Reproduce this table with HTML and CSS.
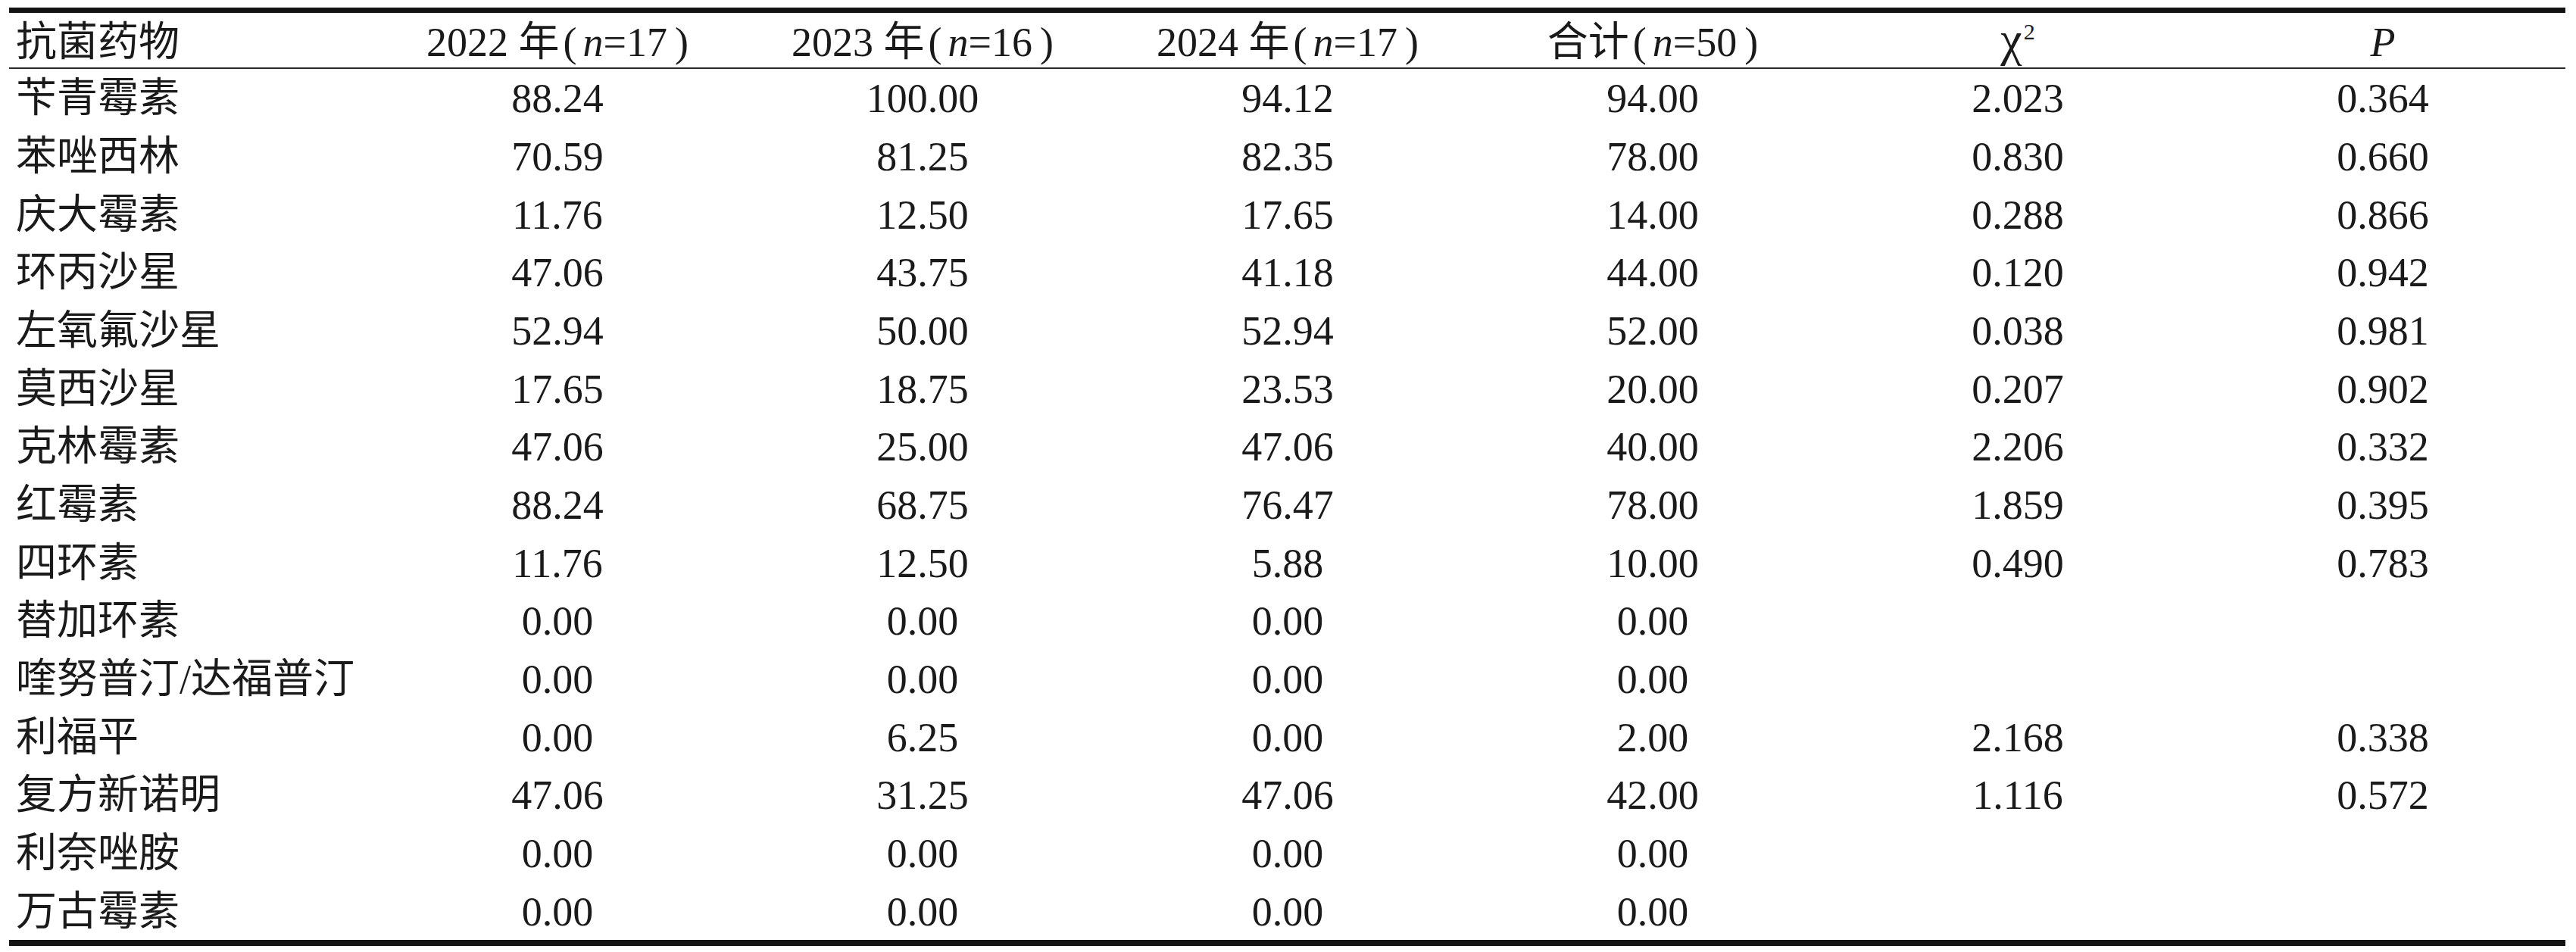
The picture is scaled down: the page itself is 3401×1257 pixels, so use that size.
FILE: index.html
```html
<!DOCTYPE html>
<html lang="zh-CN">
<head>
<meta charset="utf-8">
<title>抗菌药物耐药率</title>
<link rel="stylesheet" href="styles.css">
</head>
<body>
<div class="table">
  <div class="row head">
    <div class="cell name">抗菌药物</div>
    <div class="cell">2022 年<span class="pl">(</span><i>n</i>=17<span class="pr">)</span></div>
    <div class="cell">2023 年<span class="pl">(</span><i>n</i>=16<span class="pr">)</span></div>
    <div class="cell">2024 年<span class="pl">(</span><i>n</i>=17<span class="pr">)</span></div>
    <div class="cell">合计<span class="pl">(</span><i>n</i>=50<span class="pr">)</span></div>
    <div class="cell"><span class="chi">χ</span><sup class="sq">2</sup></div>
    <div class="cell"><i>P</i></div>
  </div>
  <div class="row"><div class="cell name">苄青霉素</div><div class="cell">88.24</div><div class="cell">100.00</div><div class="cell">94.12</div><div class="cell">94.00</div><div class="cell">2.023</div><div class="cell">0.364</div></div>
  <div class="row"><div class="cell name">苯唑西林</div><div class="cell">70.59</div><div class="cell">81.25</div><div class="cell">82.35</div><div class="cell">78.00</div><div class="cell">0.830</div><div class="cell">0.660</div></div>
  <div class="row"><div class="cell name">庆大霉素</div><div class="cell">11.76</div><div class="cell">12.50</div><div class="cell">17.65</div><div class="cell">14.00</div><div class="cell">0.288</div><div class="cell">0.866</div></div>
  <div class="row"><div class="cell name">环丙沙星</div><div class="cell">47.06</div><div class="cell">43.75</div><div class="cell">41.18</div><div class="cell">44.00</div><div class="cell">0.120</div><div class="cell">0.942</div></div>
  <div class="row"><div class="cell name">左氧氟沙星</div><div class="cell">52.94</div><div class="cell">50.00</div><div class="cell">52.94</div><div class="cell">52.00</div><div class="cell">0.038</div><div class="cell">0.981</div></div>
  <div class="row"><div class="cell name">莫西沙星</div><div class="cell">17.65</div><div class="cell">18.75</div><div class="cell">23.53</div><div class="cell">20.00</div><div class="cell">0.207</div><div class="cell">0.902</div></div>
  <div class="row"><div class="cell name">克林霉素</div><div class="cell">47.06</div><div class="cell">25.00</div><div class="cell">47.06</div><div class="cell">40.00</div><div class="cell">2.206</div><div class="cell">0.332</div></div>
  <div class="row"><div class="cell name">红霉素</div><div class="cell">88.24</div><div class="cell">68.75</div><div class="cell">76.47</div><div class="cell">78.00</div><div class="cell">1.859</div><div class="cell">0.395</div></div>
  <div class="row"><div class="cell name">四环素</div><div class="cell">11.76</div><div class="cell">12.50</div><div class="cell">5.88</div><div class="cell">10.00</div><div class="cell">0.490</div><div class="cell">0.783</div></div>
  <div class="row"><div class="cell name">替加环素</div><div class="cell">0.00</div><div class="cell">0.00</div><div class="cell">0.00</div><div class="cell">0.00</div><div class="cell"></div><div class="cell"></div></div>
  <div class="row"><div class="cell name">喹努普汀/达福普汀</div><div class="cell">0.00</div><div class="cell">0.00</div><div class="cell">0.00</div><div class="cell">0.00</div><div class="cell"></div><div class="cell"></div></div>
  <div class="row"><div class="cell name">利福平</div><div class="cell">0.00</div><div class="cell">6.25</div><div class="cell">0.00</div><div class="cell">2.00</div><div class="cell">2.168</div><div class="cell">0.338</div></div>
  <div class="row"><div class="cell name">复方新诺明</div><div class="cell">47.06</div><div class="cell">31.25</div><div class="cell">47.06</div><div class="cell">42.00</div><div class="cell">1.116</div><div class="cell">0.572</div></div>
  <div class="row"><div class="cell name">利奈唑胺</div><div class="cell">0.00</div><div class="cell">0.00</div><div class="cell">0.00</div><div class="cell">0.00</div><div class="cell"></div><div class="cell"></div></div>
  <div class="row"><div class="cell name">万古霉素</div><div class="cell">0.00</div><div class="cell">0.00</div><div class="cell">0.00</div><div class="cell">0.00</div><div class="cell"></div><div class="cell"></div></div>
</div>
</body>
</html>
```

FILE: styles.css
```css
html, body {
  margin: 0;
  padding: 0;
  background: #ffffff;
}

body {
  font-family: "Liberation Serif", "Noto Sans CJK SC", serif;
  font-size: 54px;
  color: #1a1a1a;
}

.table {
  margin: 10px 0 0 12px;
  width: 3375px;
  border-top: 7px solid #141414;
  border-bottom: 8px solid #141414;
}

.row {
  display: grid;
  grid-template-columns: 483px repeat(6, 1fr);
  align-items: center;
  box-sizing: border-box;
  height: 76.67px;
  padding-top: 2px;
  line-height: 1;
}

.row.head {
  height: 74px;
  padding-top: 5px;
  border-bottom: 2px solid #2a2a2a;
}

.cell {
  text-align: center;
  white-space: nowrap;
}

.cell.name {
  text-align: left;
  padding-left: 9px;
}

.pl {
  margin: 0 8px 0 5px;
}

.pr {
  margin-left: 10px;
}

.chi {
  font-size: 64px;
  line-height: 0;
  vertical-align: 1px;
}

.sq {
  font-size: 30px;
  line-height: 0;
  vertical-align: 22px;
  margin-left: 2px;
}
```
